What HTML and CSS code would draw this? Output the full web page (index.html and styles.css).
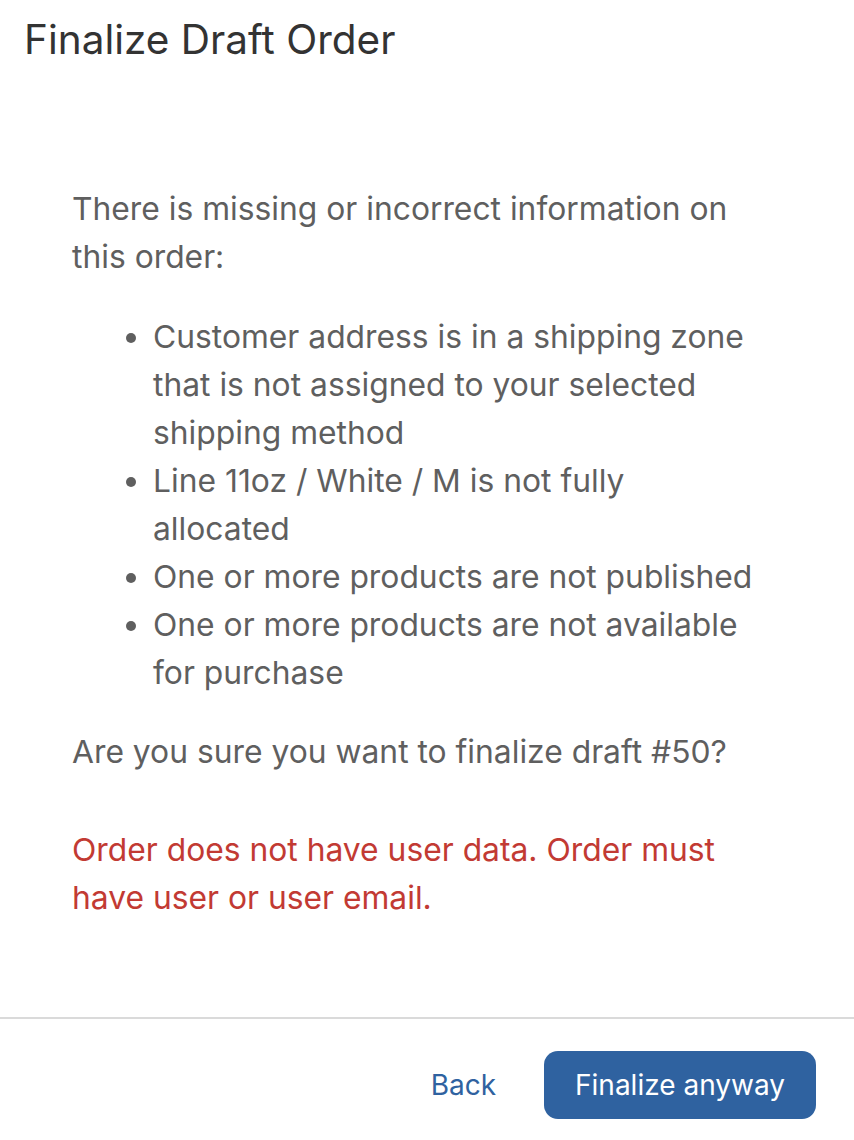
FILE: index.html
```html
<!DOCTYPE html>
<html lang="en">
<head>
<meta charset="utf-8">
<title>Finalize Draft Order</title>
<link rel="stylesheet" href="styles.css">
</head>
<body>
<div class="dialog">
  <h2 class="dialog-title">Finalize Draft Order</h2>
  <div class="dialog-content">
    <p class="text">There is missing or incorrect information on this order:</p>
    <ul class="issues">
      <li>Customer address is in a shipping zone that is not assigned to your selected shipping method</li>
      <li>Line 11oz / White / M is not fully allocated</li>
      <li>One or more products are not published</li>
      <li>One or more products are not available for purchase</li>
    </ul>
    <p class="text">Are you sure you want to finalize draft #50?</p>
    <p class="error">Order does not have user data. Order must have user or user email.</p>
  </div>
  <div class="dialog-actions">
    <button class="btn-text" type="button">Back</button>
    <button class="btn-primary" type="button">Finalize anyway</button>
  </div>
</div>
</body>
</html>
```

FILE: styles.css
```css
html, body {
  margin: 0;
  padding: 0;
  background: #ffffff;
}

body {
  font-family: Inter, "Noto Sans", sans-serif;
  -webkit-font-smoothing: antialiased;
}

.dialog {
  display: flex;
  flex-direction: column;
  min-height: 1140px;
}

.dialog-title {
  margin: 0;
  padding: 16px 24px 0 24px;
  font-size: 40.5px;
  line-height: 48px;
  font-weight: 400;
  color: #333333;
}

.dialog-content {
  padding: 121px 94px 0 72px;
  flex: 1;
  font-size: 31.8px;
  line-height: 48px;
  color: #5f5f5f;
}

.text {
  margin: 0 0 32px 0;
}

.issues {
  margin: 0 0 31px 0;
  padding-left: 81px;
}

.error {
  margin: 50px 0 0 0;
  color: #c23a33;
}

.dialog-actions {
  border-top: 2px solid #dadada;
  display: flex;
  justify-content: flex-end;
  align-items: center;
  gap: 48px;
  padding: 32px 38px 21px 0;
}

.btn-text {
  font-family: inherit;
  font-size: 28px;
  line-height: 36px;
  color: #2f62a0;
  background: none;
  border: none;
  padding: 0;
  cursor: pointer;
}

.btn-primary {
  font-family: inherit;
  font-size: 28px;
  line-height: 36px;
  color: #ffffff;
  background: #2f62a0;
  border: none;
  border-radius: 14px;
  height: 68px;
  padding: 0 31px;
  cursor: pointer;
}
```
